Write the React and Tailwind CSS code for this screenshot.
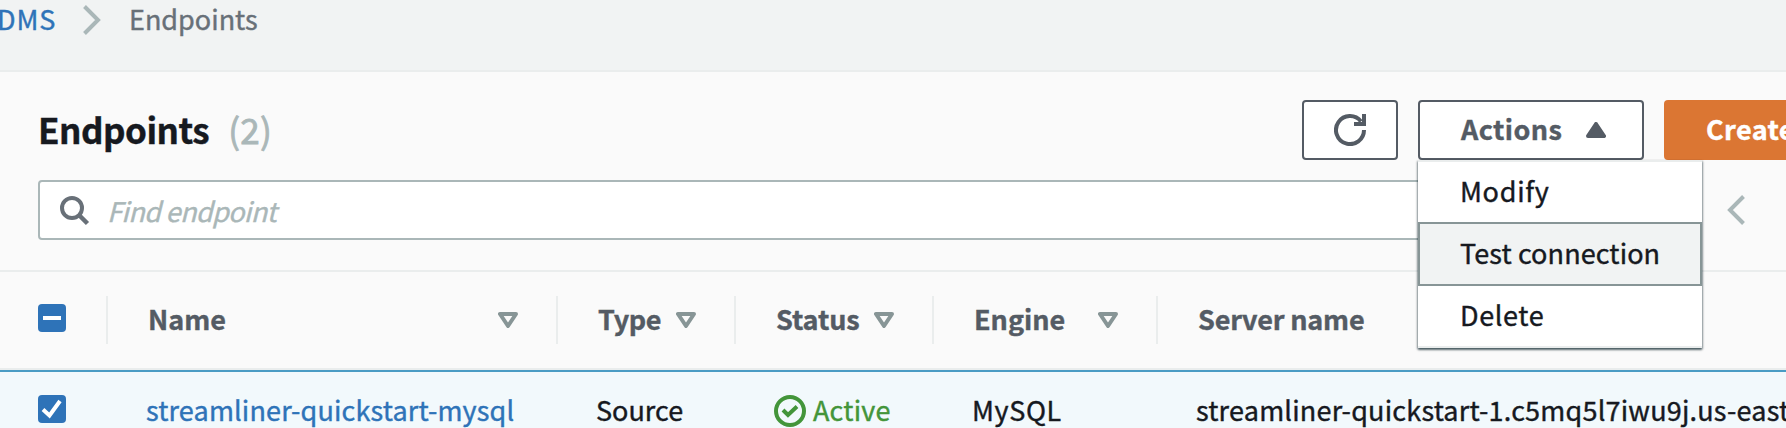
const BOX_BLUE = "#2e73b8";

function Sort() {
  return (
    <svg className="block shrink-0" width="20" height="16" viewBox="0 0 20 16">
      <path d="M2 2H18L10 14Z" fill="none" stroke="#879596" strokeWidth="4" strokeLinejoin="round" />
    </svg>
  );
}

function Checkbox({ mixed }) {
  return (
    <svg className="block shrink-0" width="28" height="28" viewBox="0 0 28 28">
      <rect width="28" height="28" rx="4" fill={BOX_BLUE} />
      {mixed ? (
        <path d="M5 14H23" stroke="#fff" strokeWidth="4" />
      ) : (
        <path d="M5 14.5L11.5 20.5L22 6" fill="none" stroke="#fff" strokeWidth="4" />
      )}
    </svg>
  );
}

function Head({ width, label, spacing, sort = true }) {
  return (
    <div className={`flex shrink-0 items-center h-12 border-l-2 border-[#eaeded] ${width}`}>
      <div className="flex flex-1 items-center justify-between pl-10 pr-[38px]">
        <span className={`pb-0.5 font-bold text-[#545b64] whitespace-nowrap ${spacing}`}>{label}</span>
        {sort && (
          <span>
            <Sort />
          </span>
        )}
      </div>
    </div>
  );
}

function MenuItem({ children, className }) {
  return <div className={`flex items-center pl-[42px] pb-0.5 whitespace-nowrap text-[#16191f] ${className}`}>{children}</div>;
}

export default function App() {
  return (
    <div className="w-[1786px] h-[428px] overflow-hidden bg-[#fafafa] font-['Noto_Sans_CJK_SC',sans-serif] text-[27px] leading-[36px] [-webkit-text-stroke:0.4px]">
      <nav className="flex items-start h-[72px] bg-[#f1f3f3] border-b-2 border-[#eaeded]">
        <span className="-ml-[3px] mt-px w-[86px] text-[#2e73b8] tracking-[0.9px]">DMS</span>
        <svg className="block mt-[5px]" width="18" height="30" viewBox="0 0 18 30">
          <path d="M1.5 1.5L15 15L1.5 28.5" fill="none" stroke="#aab7b8" strokeWidth="4" />
        </svg>
        <span className="ml-7 mt-px text-[#687078]">Endpoints</span>
      </nav>

      <section className="h-[200px] border-b-2 border-[#eaeded] pt-7">
        <div className="flex items-start h-20 pl-[38px]">
          <h1 className="flex items-center h-[58px] grow text-[35px] font-bold tracking-[-0.5px] text-[#16191f]">
            Endpoints
            <span className="ml-[19px] font-normal tracking-[0.3px] text-[#aab7b8] [-webkit-text-stroke:0.8px]">(2)</span>
          </h1>
          <div className="flex gap-5 w-[484px] shrink-0">
            <button className="flex items-center justify-center w-24 h-[60px] shrink-0 rounded border-2 border-[#545b64] bg-white">
              <svg width="32" height="32" viewBox="0 0 32 32">
                <path d="M30 16A14 14 0 1 1 27 7.4" fill="none" stroke="#545b64" strokeWidth="4" />
                <path d="M28 0H32V12H20V8H28Z" fill="#545b64" />
              </svg>
            </button>
            <div className="relative shrink-0">
              <button className="flex items-center justify-between w-[226px] h-[60px] rounded border-2 border-[#545b64] bg-white pl-[41px] pr-9 font-bold text-[#545b64]">
                <span className="pb-0.5 tracking-[0.4px]">Actions</span>
                <svg width="20" height="16" viewBox="0 0 20 16">
                  <path d="M2 14L10 2L18 14Z" fill="#545b64" stroke="#545b64" strokeWidth="4" strokeLinejoin="round" />
                </svg>
              </button>
              <div className="absolute left-0 top-[60px] z-10 w-[284px] h-[188px] bg-white border-y-2 border-[#eaeded] shadow-[0_2px_2px_0_rgba(0,28,36,0.5),1px_1px_2px_0_rgba(0,28,36,0.3),-1px_1px_2px_0_rgba(0,28,36,0.3)]">
                <MenuItem className="h-[60px] tracking-[0.7px]">Modify</MenuItem>
                <MenuItem className="h-16 bg-[#f1f3f3] outline-2 -outline-offset-2 outline-[#879596] tracking-[0.1px]">
                  Test connection
                </MenuItem>
                <MenuItem className="h-[60px] tracking-[0.6px]">Delete</MenuItem>
              </div>
            </div>
            <button className="flex items-center w-[280px] h-[60px] shrink-0 rounded bg-[#db7633] pl-[42px] pb-0.5 font-bold text-white whitespace-nowrap tracking-[0.4px]">
              Create endpoint
            </button>
          </div>
        </div>
        <div className="flex items-center pl-[38px]">
          <div className="flex items-center w-[1424px] h-[60px] rounded border-2 border-[#aab7b8] bg-white pl-5">
            <svg className="mt-0.5" width="30" height="30" viewBox="0 0 30 30">
              <circle cx="12" cy="12" r="10" fill="none" stroke="#687078" strokeWidth="4" />
              <path d="M19 19L27.5 27.5" stroke="#687078" strokeWidth="4.5" />
            </svg>
            <span className="ml-[17px] mt-0.5 italic tracking-[-0.6px] text-[#aab7b8]">Find endpoint</span>
          </div>
          <svg className="ml-[265px]" width="18" height="30" viewBox="0 0 18 30">
            <path d="M16.5 1.5L3 15L16.5 28.5" fill="none" stroke="#aab7b8" strokeWidth="4" />
          </svg>
        </div>
      </section>

      <div className="flex items-center h-[98px] border-b-2 border-[#eaeded]">
        <div className="w-[106px] shrink-0 pl-[38px] pb-1">
          <Checkbox mixed />
        </div>
        <Head width="w-[450px]" label="Name" spacing="tracking-normal" />
        <Head width="w-[178px]" label="Type" spacing="tracking-[-0.4px]" />
        <Head width="w-[198px]" label="Status" spacing="tracking-[-0.1px]" />
        <Head width="w-[224px]" label="Engine" spacing="tracking-normal" />
        <Head width="w-[630px]" label="Server name" spacing="tracking-[-0.2px]" sort={false} />
      </div>

      <div className="flex items-center h-[76px] border-t-2 border-[#4a9cc4] bg-[#f2f9fc] text-[#16191f] whitespace-nowrap">
        <div className="w-[146px] shrink-0 pl-[38px]">
          <Checkbox />
        </div>
        <span className="w-[450px] shrink-0 pt-0.5 text-[#2e73b8] tracking-[0.15px]">streamliner-quickstart-mysql</span>
        <span className="w-[178px] shrink-0 pt-0.5">Source</span>
        <span className="flex items-center gap-[7px] w-[198px] shrink-0 text-[#43953a]">
          <svg className="mt-1" width="32" height="32" viewBox="0 0 32 32">
            <circle cx="16" cy="16" r="14" fill="none" stroke="#43953a" strokeWidth="4" />
            <path d="M9 15L14 20L23 11.5" fill="none" stroke="#43953a" strokeWidth="4" />
          </svg>
          <span className="pt-0.5 tracking-[0.2px]">Active</span>
        </span>
        <span className="w-[224px] shrink-0 pt-0.5 tracking-[0.6px]">MySQL</span>
        <span className="pt-0.5 tracking-[0.2px]">streamliner-quickstart-1.c5mq5l7iwu9j.us-east-1.rds.amazonaws.com</span>
      </div>
    </div>
  );
}
